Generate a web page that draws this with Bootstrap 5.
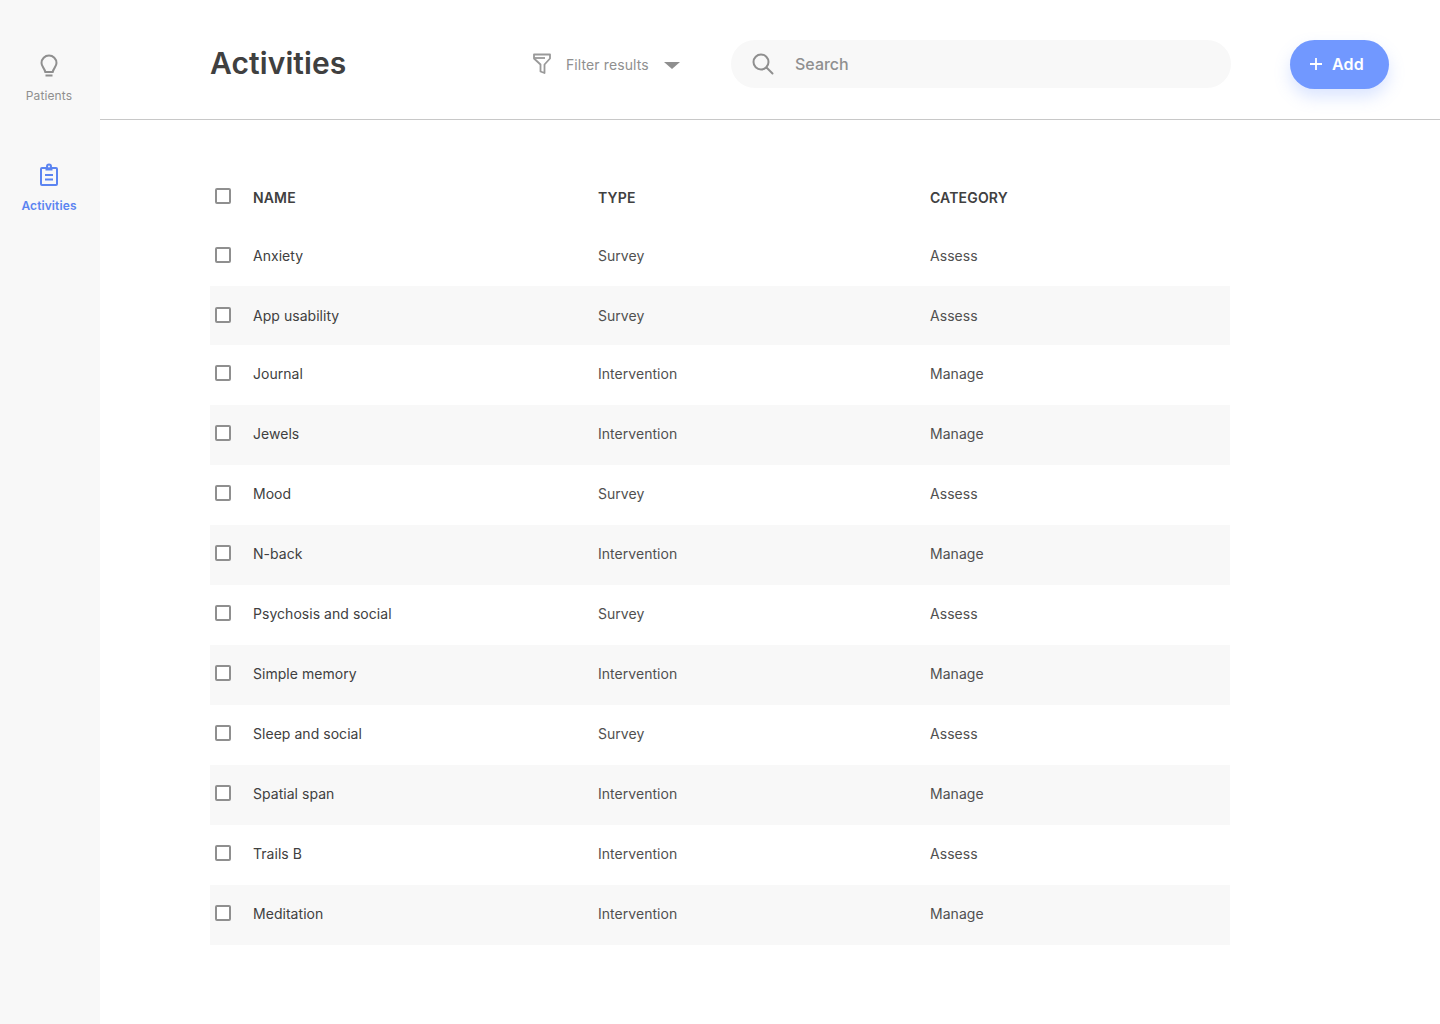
<!DOCTYPE html>
<html lang="en">
<head>
    <meta charset="UTF-8">
    <meta name="viewport" content="width=device-width, initial-scale=1.0">
    <title>Activities</title>
    <link href="https://cdn.jsdelivr.net/npm/bootstrap@5.3.0/dist/css/bootstrap.min.css" rel="stylesheet">
    <style>
        body { font-family: Inter, "Liberation Sans", sans-serif; color: #404040; background: #fff; min-height: 1024px; }
        .side-rail { width: 100px; min-height: 1024px; background: #f8f8f8; padding: 53px 2px 0 0; }
        .rail-link { font-size: 12px; line-height: 16px; color: #8f8f8f; text-decoration: none; text-align: center; letter-spacing: .1px; }
        .rail-link svg { display: block; margin: 0 auto 10px; }
        .rail-link.on { color: #5b84f1; font-weight: 600; margin-top: 59px; }
        .page-head { height: 120px; border-bottom: 1px solid #c8c8c8; padding: 9px 51px 0 110px; }
        .page-title { width: 322px; font-size: 30px; font-weight: 600; line-height: 40px; color: #404040; margin: 0 0 2px; letter-spacing: .1px; }
        .filter-box { width: 199px; padding-left: 1px; font-size: 14px; color: #8f8f8f; letter-spacing: .1px; }
        .filter-box svg { margin-right: 15px; }
        .filter-box .caret { width: 0; height: 0; border-left: 8px solid transparent; border-right: 8px solid transparent; border-top: 7px solid #8f8f8f; margin-left: 15px; margin-top: 3px; }
        .search-box { width: 500px; height: 48px; border-radius: 24px; background: #f8f8f8; padding-left: 20px; }
        .search-box input { border: 0; background: transparent; outline: 0; margin-left: 18px; font-size: 16px; font-weight: 500; width: 400px; }
        .search-box input::placeholder { color: #8f8f8f; opacity: 1; }
        .add-btn { width: 99px; height: 49px; border-radius: 25px; background: #7198ff; color: #fff; border: 0; font-size: 16px; font-weight: 600; margin-left: 59px; box-shadow: 0 8px 16px rgba(113,152,255,.25); }
        .add-btn:hover { background: #7198ff; color: #fff; }
        .add-label { margin-right: 5px; margin-left: 10px; letter-spacing: .2px; }
        .list-wrap { padding: 48px 0 0 110px; width: 1130px; }
        .list-grid { width: 1020px; margin: 0; table-layout: fixed; font-size: 14px; letter-spacing: .04px; }
        .list-grid > :not(caption) > * > * { padding: 0; border: 0; vertical-align: middle; color: #404040; box-shadow: none; background: transparent; }
        .list-grid th { font-weight: 600; height: 58px; letter-spacing: .15px; }
        .list-grid td { height: 60px; }
        .list-grid td:not(:first-child) { padding-bottom: 4px; }
        .list-grid tbody tr:nth-child(1) td:not(:first-child) { padding-bottom: 2px; }
        .list-grid tbody tr:nth-child(2) td:not(:first-child) { padding-bottom: 0; }
        .list-grid tbody tr:nth-child(2) td { height: 59px; }
        .list-grid tbody tr:nth-child(even) > td { background: #f8f8f8; }
        .list-grid td:nth-child(n+3) { color: #505050; }
        .col-check { width: 43px; }
        .col-name { width: 345px; }
        .col-type { width: 332px; }
        .tick { width: 16px; height: 16px; margin: -4px 0 0 5px; border: 2px solid #8f8f8f; border-radius: 2px; display: block; appearance: none; background: #fff; }
        .list-grid th .tick, .list-grid tbody tr:nth-child(-n+2) .tick { margin-top: -2px; }
    </style>
</head>
<body>
<div class="d-flex">
    <nav class="side-rail d-flex flex-column flex-shrink-0">
        <a class="rail-link" href="#">
            <svg width="20" height="25" viewBox="0 0 20 25" fill="none" stroke="#8f8f8f" stroke-width="2">
                <path d="M10 2.500a7.500 7.500 0 0 0-7.500 7.500c0 3.600 3 5 3.800 9h7.400c.8-4 3.800-5.400 3.800-9a7.500 7.500 0 0 0-7.500-7.500z"/>
                <path d="M6.500 22.500h7"/>
            </svg>
            Patients
        </a>
        <a class="rail-link on" href="#">
            <svg width="20" height="25" viewBox="0 0 20 25" fill="none" stroke="#5b84f1" stroke-width="2">
                <rect x="2" y="5" width="16" height="17" rx="1"/>
                <circle cx="10" cy="3.500" r="2" fill="#f8f8f8"/>
                <path d="M6.500 6.500h7M6 12h8M6 16.500h8"/>
            </svg>
            Activities
        </a>
    </nav>
    <main class="flex-grow-1">
        <header class="page-head d-flex align-items-center">
            <h1 class="page-title">Activities</h1>
            <div class="filter-box d-flex align-items-center">
                <svg width="18" height="22" viewBox="0 0 18 22" fill="none" stroke="#999" stroke-width="1.800" stroke-linejoin="round">
                    <path d="M1 1.500h16v4l-5.500 6v8.500l-4-1.500v-7l-6.500-6z"/>
                    <path d="M1 5h11"/>
                </svg>
                <span>Filter results</span>
                <span class="caret"></span>
            </div>
            <div class="search-box d-flex align-items-center">
                <svg width="24" height="24" viewBox="0 0 24 24" fill="none" stroke="#8f8f8f" stroke-width="2" stroke-linecap="round">
                    <circle cx="10" cy="10" r="7.500"/>
                    <path d="M15.500 15.500l6 6"/>
                </svg>
                <input type="text" placeholder="Search">
            </div>
            <button class="btn add-btn d-flex align-items-center justify-content-center p-0" type="button">
                <svg width="12" height="12" viewBox="0 0 12 12" stroke="#fff" stroke-width="1.800"><path d="M6 0v12M0 6h12"/></svg>
                <span class="add-label">Add</span>
            </button>
        </header>
        <div class="list-wrap">
            <table class="table list-grid">
                <thead>
                <tr>
                    <th class="col-check"><input class="tick" type="checkbox"></th>
                    <th class="col-name">NAME</th>
                    <th class="col-type">TYPE</th>
                    <th>CATEGORY</th>
                </tr>
                </thead>
                <tbody id="activityRows"></tbody>
            </table>
        </div>
    </main>
</div>

<script>
    const activities = [
        ['Anxiety', 'Survey', 'Assess'],
        ['App usability', 'Survey', 'Assess'],
        ['Journal', 'Intervention', 'Manage'],
        ['Jewels', 'Intervention', 'Manage'],
        ['Mood', 'Survey', 'Assess'],
        ['N-back', 'Intervention', 'Manage'],
        ['Psychosis and social', 'Survey', 'Assess'],
        ['Simple memory', 'Intervention', 'Manage'],
        ['Sleep and social', 'Survey', 'Assess'],
        ['Spatial span', 'Intervention', 'Manage'],
        ['Trails B', 'Intervention', 'Assess'],
        ['Meditation', 'Intervention', 'Manage']
    ];
    let activityRows = document.getElementById('activityRows');
    activities.forEach(a => {
        activityRows.innerHTML += `<tr>
            <td><input class="tick" type="checkbox"></td>
            <td>${a[0]}</td>
            <td>${a[1]}</td>
            <td>${a[2]}</td>
        </tr>`;
    });
</script>
<script src="https://cdn.jsdelivr.net/npm/bootstrap@5.3.0/dist/js/bootstrap.bundle.min.js"></script>
</body>
</html>
